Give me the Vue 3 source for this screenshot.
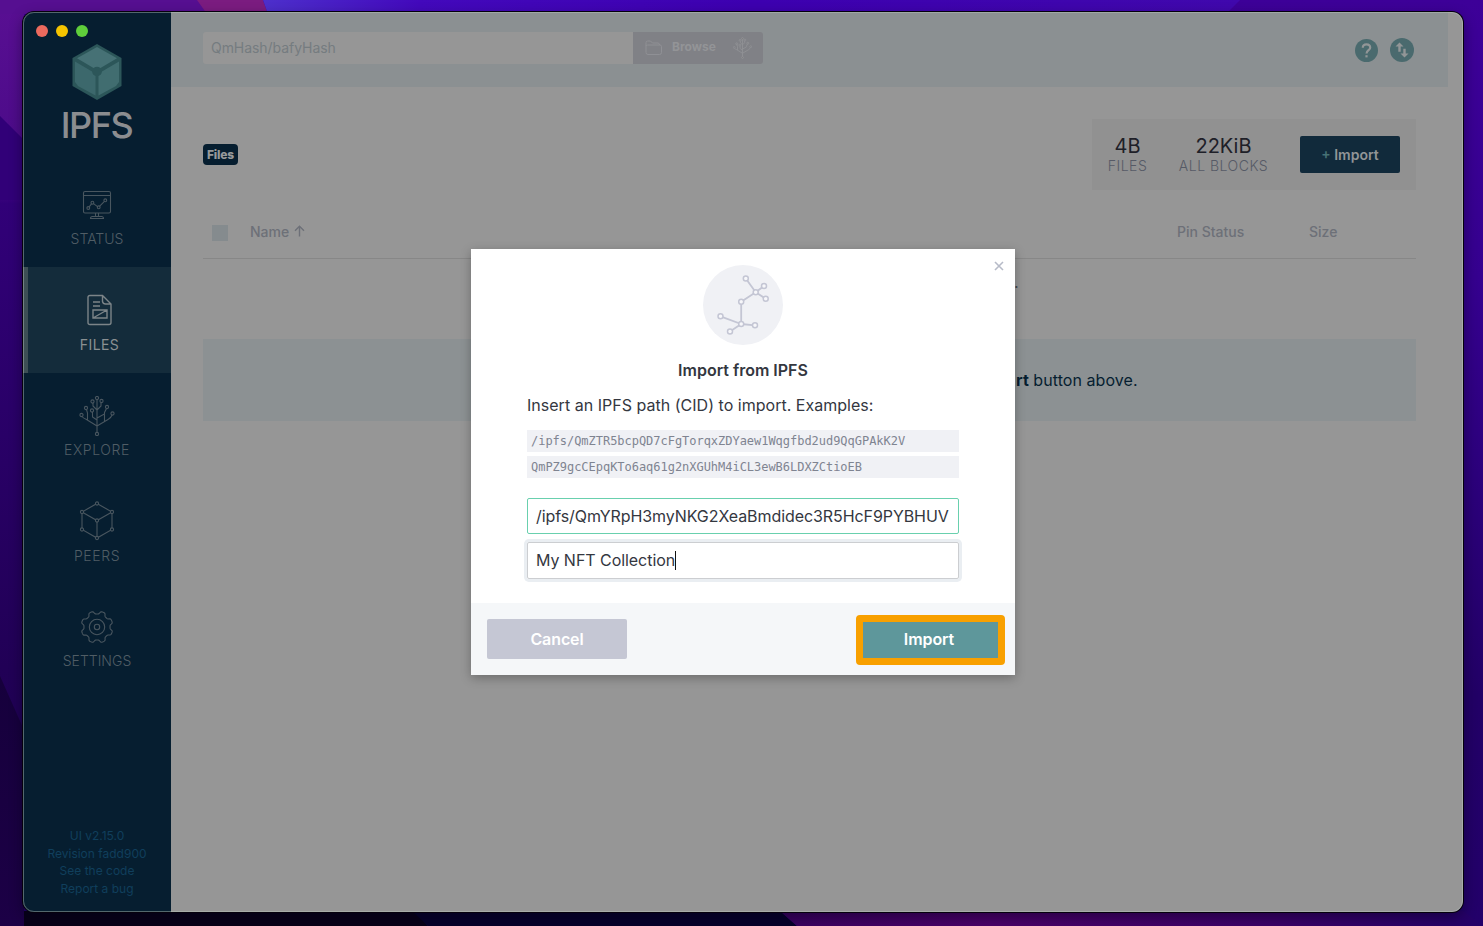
<script setup>
const nav = [
  { id: 'status', label: 'STATUS' },
  { id: 'files', label: 'FILES', active: true },
  { id: 'explore', label: 'EXPLORE' },
  { id: 'peers', label: 'PEERS' },
  { id: 'settings', label: 'SETTINGS' },
]
const gear = (() => {
  const pts = []
  for (let i = 0; i <= 160; i++) {
    const a = (i / 160) * Math.PI * 2
    const s = Math.cos(a * 8)
    const r = 14.5 + 1.5 * Math.tanh(s * 2.2)
    pts.push((17 + r * Math.sin(a + 0.39)).toFixed(2) + ' ' + (17 - r * Math.cos(a + 0.39)).toFixed(2))
  }
  return 'M' + pts.join('L') + 'Z'
})()
const treeDots = [[18, 2], [13.5, 5.5], [22.5, 5], [7, 12], [13, 14.5], [28, 11], [2.5, 19], [33.5, 17.5], [18, 38]]
</script>

<template>
  <div class="desktop">
    <svg class="wallpaper" width="1483" height="926" viewBox="0 0 1483 926" preserveAspectRatio="none">
      <defs>
        <linearGradient id="base" x1="0" y1="0" x2="0" y2="1">
          <stop offset="0" stop-color="#3d0098" /><stop offset=".3" stop-color="#35008f" /><stop offset=".75" stop-color="#220066" /><stop offset="1" stop-color="#23006a" />
        </linearGradient>
        <linearGradient id="left" x1="0" y1="0" x2="0" y2="1">
          <stop offset="0" stop-color="#590f93" /><stop offset=".2" stop-color="#480a86" /><stop offset=".22" stop-color="#310078" /><stop offset=".72" stop-color="#210056" /><stop offset="1" stop-color="#1b0050" />
        </linearGradient>
        <linearGradient id="leftlow" x1="0" y1="0" x2="0" y2="1">
          <stop offset="0" stop-color="#16003c" /><stop offset="1" stop-color="#1c0046" />
        </linearGradient>
        <linearGradient id="top" x1="0" y1="0" x2="1" y2="0">
          <stop offset="0" stop-color="#4d30cc" /><stop offset=".16" stop-color="#4309bc" /><stop offset=".5" stop-color="#3d00b0" /><stop offset="1" stop-color="#4008ad" />
        </linearGradient>
        <linearGradient id="violet" x1="0" y1="0" x2="1" y2="0">
          <stop offset="0" stop-color="#3a0060" /><stop offset=".3" stop-color="#4b0069" /><stop offset=".7" stop-color="#3b0068" /><stop offset="1" stop-color="#240068" />
        </linearGradient>
      </defs>
      <rect width="1483" height="926" fill="url(#base)" />
      <rect width="24" height="926" fill="url(#left)" />
      <path d="M0 116 24 140V200H0Z" fill="#310078" />
      <path d="M0 676 24 730V926H0Z" fill="url(#leftlow)" />
      <path d="M0 0H200L230 14H0Z" fill="#560f91" />
      <path d="M197 0H263L268 14H207Z" fill="#7b1c80" />
      <path d="M263 0H1240L1226 14H268Z" fill="url(#top)" />
      <path d="M24 911H415L428 926H24Z" fill="#080018" />
      <path d="M412 911H780L797 926H428Z" fill="#06002b" />
      <path d="M780 911H1463L1483 926H797Z" fill="url(#violet)" />
    </svg>
    <div class="window">
      <aside class="sidebar">
        <div class="lights"><i class="red"></i><i class="yellow"></i><i class="green"></i></div>
        <div class="brand">
          <svg width="50" height="56" viewBox="0 0 50 56">
            <path d="M25 0 49.5 14V42L25 56 .5 42V14Z" fill="#2c5659" />
            <path d="M25 3 45 14.3 28.5 24Q25 21.500 21.500 24L5 14.300Z" fill="#467175" />
            <path d="M3 17.500 20 27.500Q20.500 31 23.500 32V51.500L6 42 3 38Z" fill="#3c686c" />
            <path d="M47 17.500 30 27.500Q29.500 31 26.500 32V51.500L44 42 47 38Z" fill="#416d70" />
          </svg>
          <span class="wordmark">IPFS</span>
        </div>
        <nav>
          <a v-for="n in nav" :key="n.id" :class="['nav-item', { active: n.active }]">
            <span class="nav-icon">
              <svg v-if="n.id === 'status'" width="30" height="30" viewBox="0 0 30 30">
                <rect x="1.500" y="1.500" width="27" height="21.500" rx="1.500" /><path d="M1.500 5.500H28.500M13.500 23v3M16.500 23v3M8.500 28.500q0-2 2-2h9q2 0 2 2zM7.200 16.800l2.300-2.900M11.500 13.600l4 3M17.700 16.200l4.500-4.600" />
                <circle cx="6.300" cy="18" r="1.400" /><circle cx="10.400" cy="12.700" r="1.400" /><circle cx="16.700" cy="17.300" r="1.400" /><circle cx="23.300" cy="10.300" r="1.400" />
              </svg>
              <svg v-else-if="n.id === 'files'" width="26" height="32" viewBox="0 0 26 32">
                <path d="M3 1.500H15.500L24 10V28.500Q24 30.500 22 30.500H3Q1 30.500 1 28.500V3.500Q1 1.500 3 1.500ZM15.500 1.500V7.500Q16 10 18.500 10H24M6 8h7M6 12h7M6 16H20V24H6ZM6 24 20 16" />
              </svg>
              <svg v-else-if="n.id === 'explore'" width="36" height="40" viewBox="0 0 36 40">
                <path d="M18 3.500V36.500M18 30 7.500 23.500Q4 22 3 20.500M18 30 29 23.500Q32 22 33 19M8.500 24V17L7.500 13.500M18 24 13.500 21V16M18 22 25.500 18V16.500L27.500 12.500M25.500 18V25.500M18 14 14 10V7M18 14 22 10V6.500" />
                <circle v-for="p in treeDots" :key="p.join()" :cx="p[0]" :cy="p[1]" r="1.600" class="node" />
              </svg>
              <svg v-else-if="n.id === 'peers'" width="36" height="40" viewBox="0 0 36 40">
                <path d="M18 2.500 33 11V28.500L18 37 3 28.500V11ZM3 11 18 19.500 33 11M18 19.500V37" />
                <circle v-for="p in [[18,2.500],[33,11],[33,28.500],[18,37],[3,28.500],[3,11],[18,19.500]]" :key="p.join()" :cx="p[0]" :cy="p[1]" r="1.600" class="node" />
              </svg>
              <svg v-else width="34" height="34" viewBox="0 0 34 34">
                <path :d="gear" /><circle cx="17" cy="17" r="7.700" /><circle cx="17" cy="17" r="2.700" />
              </svg>
            </span>
            <span :class="['nav-label', n.id]">{{ n.label }}</span>
          </a>
        </nav>
        <footer><span>UI v2.15.0</span><span>Revision fadd900</span><span>See the code</span><span>Report a bug</span></footer>
      </aside>
      <main>
        <header>
          <div class="search">
            <span class="hash">QmHash/bafyHash</span>
            <span class="browse">
              <svg width="18" height="16" viewBox="0 0 18 16"><path d="M1 6V2.500Q1 1 2.500 1H5.500L7.500 3H13Q14.500 3 14.500 5M1 6Q1 5 2.500 5H15Q16.500 5 16.500 6.500V12.500Q16.500 14.500 14.500 14.500H3Q1 14.500 1 12.500Z" /></svg>
              <b>Browse</b>
              <svg width="19" height="22" viewBox="0 0 36 40" class="tree">
                <path d="M18 3.500V36.500M18 30 7.500 23.500Q4 22 3 20.500M18 30 29 23.500Q32 22 33 19M8.500 24V17L7.500 13.500M18 24 13.500 21V16M18 22 25.500 18V16.500L27.500 12.500M18 14 14 10V7M18 14 22 10V6.500" />
                <circle v-for="p in treeDots" :key="p.join()" :cx="p[0]" :cy="p[1]" r="1.800" />
              </svg>
            </span>
          </div>
          <div class="header-icons">
            <svg width="23" height="23" viewBox="0.500 0.500 23 23"><circle cx="12" cy="12" r="11.500" fill="#4a6a6e" /><path d="M8.300 9.300Q8.300 5.800 12 5.800T15.700 9.200C15.700 11.500 12 12 12 15" fill="none" stroke="#929697" stroke-width="2.200" /><rect x="10.900" y="16.700" width="2.200" height="2.200" fill="#929697" /></svg>
            <svg width="24" height="24" viewBox="0 0 24 24"><circle cx="12" cy="12" r="12" fill="#4a6a6e" /><path d="M9.500 13.700V6.500M14.500 10.800V17.500" fill="none" stroke="#929697" stroke-width="2.400" /><path d="M5.500 8.600 9.500 4.600 13.500 8.600ZM10.500 15.500 14.500 19.500 18.500 15.500Z" fill="#929697" /></svg>
          </div>
        </header>
        <section class="content">
          <div class="toolbar">
            <span class="crumb">Files</span>
            <div class="summary">
              <div class="stat files-stat"><strong>4B</strong><small>FILES</small></div>
              <div class="stat blocks-stat"><strong>22KiB</strong><small>ALL BLOCKS</small></div>
              <button class="add"><span>+</span> Import</button>
            </div>
          </div>
          <div class="table-head">
            <i class="check"></i>
            <span class="name">Name <svg width="11" height="12" viewBox="0 0 11 12"><path d="M5.500 11.500V1.500M1 5.700 5.500 1.200 10 5.700" /></svg></span>
            <span class="pin">Pin Status</span><span class="size">Size</span>
          </div>
          <div class="empty-row"><span>.</span></div>
          <div class="notice"><span><b>rt</b> button above.</span></div>
        </section>
      </main>
    </div>
    <div class="modal">
      <div class="modal-body">
        <svg class="close" width="10" height="10" viewBox="0 0 10 10"><path d="M1 1 9 9M9 1 1 9" /></svg>
        <svg class="badge" width="80" height="80" viewBox="0 0 80 80">
          <circle cx="40" cy="40" r="40" fill="#f0f1f5" />
          <path d="M42.800 13.500 52.700 27.300 61 21M52.700 27.300 62.700 33.800M52.700 27.300 38.200 36.700V59L17.500 51.300M38.200 59 27 66.500M38.200 59 52 60.300" />
          <circle v-for="p in [[42.800,13.500],[61,21],[52.700,27.300],[62.700,33.800],[38.200,36.700],[38.200,59],[17.500,51.300],[27,66.500],[52,60.300]]" :key="p.join()" :cx="p[0]" :cy="p[1]" r="2.500" class="dot" />
        </svg>
        <h2>Import from IPFS</h2>
        <p>Insert an IPFS path (CID) to import. Examples:</p>
        <code class="first">/ipfs/QmZTR5bcpQD7cFgTorqxZDYaew1Wqgfbd2ud9QqGPAkK2V</code>
        <code>QmPZ9gcCEpqKTo6aq61g2nXGUhM4iCL3ewB6LDXZCtioEB</code>
        <div class="field valid"><span>/ipfs/QmYRpH3myNKG2XeaBmdidec3R5HcF9PYBHUV</span></div>
        <div class="field focus"><span class="typed">My NFT Collection</span><i></i></div>
      </div>
      <div class="modal-actions"><button class="cancel">Cancel</button><button class="import">Import</button></div>
    </div>
  </div>
</template>

<style>
html, body { margin: 0; overflow: hidden; }
</style>
<style scoped>
* { box-sizing: border-box; }
.desktop { position: relative; width: 1483px; height: 926px; padding: 12px 20px 14px 23px; font-family: Inter, "Liberation Sans", sans-serif; background: #290079; overflow: hidden; }
.wallpaper { position: absolute; left: 0; top: 0; }
.window { position: relative; display: flex; width: 1440px; height: 900px; border-radius: 11px; overflow: hidden; background: #969696; box-shadow: 0 0 0 1px #05000d, 0 5px 14px rgba(0, 0, 20, .45); }
.window::after { content: ""; position: absolute; inset: 0; border: 1px solid rgba(190, 205, 195, .42); border-radius: 11px; }
.sidebar { width: 148px; flex: none; background: #061e30; display: flex; flex-direction: column; }
.lights { display: flex; gap: 8px; padding: 13px 0 0 13px; height: 32px; }
.lights i { width: 12px; height: 12px; border-radius: 50%; }
.red { background: #ec6a5e; } .yellow { background: #f5c400; } .green { background: #5fce3b; }
.brand { display: flex; flex-direction: column; align-items: center; height: 117.500px; }
.wordmark { font-size: 36px; line-height: 40px; font-weight: 550; color: #8b8d90; letter-spacing: -1.500px; margin: 5px 0 0 -1px; }
.nav-item { display: flex; flex-direction: column; align-items: center; height: 105.330px; padding-top: 23.300px; }
.nav-item.active { background: #142c3b; border-left: 5px solid #3d4f55; height: 106px; padding-top: 23px; }
.nav-icon { height: 40px; display: flex; align-items: center; justify-content: center; }
.nav-icon svg { fill: none; stroke: #49565f; stroke-width: 1.100; }
.active .nav-icon svg { stroke: #7c8488; stroke-width: 1.400; }
.node { fill: #061e30; }
.nav-label { font-size: 14px; line-height: 18px; margin-top: 5px; color: #505d65; font-weight: 300; }
.nav-label.explore, .nav-label.peers { letter-spacing: .6px; }
.nav-label.files, .nav-label.peers { margin-top: 6px; }
.active .nav-label { color: #8a9092; font-weight: 400; letter-spacing: .4px; }
footer { margin-top: auto; display: flex; flex-direction: column; align-items: center; color: #103f5c; font-size: 12px; line-height: 17.670px; padding-bottom: 14.200px; }
main { flex: 1; min-width: 0; }
header { width: 1277px; height: 75px; background: #8b9092; display: flex; justify-content: space-between; padding: 20px 34px 0 32px; }
.search { width: 560px; height: 32px; display: flex; border-radius: 3px; overflow: hidden; }
.hash { width: 430px; background: #969696; padding-left: 8px; line-height: 32px; font-size: 14px; color: #757c80; letter-spacing: -.050px; }
.browse { width: 130px; background: #808186; display: flex; align-items: center; padding-left: 12px; }
.browse svg { fill: none; stroke: #919296; stroke-width: .9; }
.browse b { color: #939497; font-size: 12px; margin: -3px 17px 0 9px; }
.browse .tree { stroke-width: 1.600; }
.header-icons { display: flex; gap: 12px; margin-top: 6px; align-items: flex-end; height: 24px; }
.content { padding: 32px 47px 0 32px; }
.toolbar { height: 71px; display: flex; justify-content: space-between; align-items: center; }
.crumb { width: 35px; height: 21px; border-radius: 4px; background: #061e30; color: #96999b; font-size: 12px; font-weight: 800; line-height: 21px; text-align: center; letter-spacing: -.2px; }
.summary { width: 324px; height: 71px; background: #919191; display: flex; padding: 17px 16px; }
.stat { display: flex; flex-direction: column; align-items: center; }
.files-stat { width: 39px; } .blocks-stat { width: 89px; margin: 0 32px; }
.stat strong { font-size: 20px; line-height: 20px; font-weight: 400; color: #1e2028; white-space: nowrap; }
.stat small { font-size: 14px; line-height: 19px; color: #565a66; font-weight: 300; white-space: nowrap; letter-spacing: .5px; }
button { font-family: inherit; border: 0; padding: 0; }
.add { width: 100px; flex: none; height: 37px; border-radius: 2px; background: #112a3b; color: #929597; font-size: 14px; font-weight: 600; margin-left: auto; }
.add span { color: #467175; }
.table-head { height: 69px; border-bottom: 1px solid #878787; display: flex; align-items: center; padding: 15px 0 0; font-size: 14px; color: #6d7078; font-weight: 450; }
.check { width: 16px; height: 16px; background: #858b8e; margin: 2px 0 0 9px; }
.name { margin-left: 22px; width: 927px; }
.name svg { fill: none; stroke: #6d7078; stroke-width: 1.400; margin-left: 1px; }
.pin { width: 132px; }
.empty-row { height: 80px; display: flex; padding: 13px 0 0 811px; font-size: 16px; color: #45474d; }
.notice { height: 82px; background: #8c9193; display: flex; align-items: center; padding-left: 813px; color: #061e30; font-size: 16px; letter-spacing: .060px; }
.modal { position: absolute; left: 471px; top: 249px; width: 544px; height: 426px; background: #fff; box-shadow: 0 3px 10px rgba(0, 0, 0, .28); }
.modal-body { position: relative; height: 354px; padding: 16px 56px 0; display: flex; flex-direction: column; }
.close { position: absolute; right: 11px; top: 12px; stroke: #b7bbc8; stroke-width: 1.600; }
.badge { align-self: center; fill: none; stroke: #c4c6d4; stroke-width: 1.800; }
.badge > circle:first-child { stroke: none; }
.dot { fill: #f7f7fa; stroke-width: 1.500; }
h2 { margin: 14px 0 0; text-align: center; font-size: 16px; line-height: 22px; font-weight: 600; color: #34373f; }
p { margin: 12px 0 0; font-size: 16px; line-height: 24px; color: #34373f; white-space: nowrap; letter-spacing: .020px; }
code { display: block; height: 22px; margin-top: 4px; padding-left: 4px; background: #f0f1f5; color: #7f8491; font: 12px/22px "DejaVu Sans Mono", monospace; letter-spacing: -.030px; white-space: nowrap; }
.first { margin-top: 13px; }
.field { height: 36px; border-radius: 2px; display: flex; align-items: center; padding: 0 8px; font-size: 16px; color: #34373f; white-space: nowrap; }
.valid { margin-top: 20px; border: 1px solid #69d0ae; letter-spacing: -.075px; }
.focus { margin-top: 8px; height: 37px; border: 1px solid #ccced1; box-shadow: 0 0 0 3px #eaeef2; padding-bottom: 1px; letter-spacing: -.050px; }
.focus i { width: 1px; height: 19px; background: #111; }
.modal-actions { height: 72px; background: #f5f7f9; display: flex; justify-content: space-between; align-items: center; padding: 0 10px 0 16px; }
.modal-actions button { color: #fff; font-size: 16px; font-weight: 600; letter-spacing: -.1px; }
.cancel { width: 140px; height: 40px; border-radius: 2px; background: #c5c7d4; }
.modal-actions .import { width: 149px; height: 50px; margin-top: 1px; background: #5e979b; border: 7px solid #f8a000; border-radius: 4px; padding: 0 3px 2px 0; }
</style>
